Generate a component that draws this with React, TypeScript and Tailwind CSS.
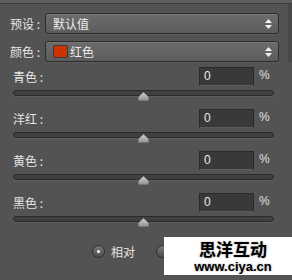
import React from 'react';

const CJK = "font-['Noto_Sans_CJK_SC','Noto_Sans',sans-serif]";

const ROWS = ['青色', '洋红', '黄色', '黑色'];

function UpDown() {
  return (
    <svg width="7" height="10" viewBox="0 0 7 10" className="shrink-0">
      <polygon points="3.5,0 7,4 0,4" fill="#f0f0f0" />
      <polygon points="0,6 7,6 3.5,10" fill="#f0f0f0" />
    </svg>
  );
}

function Select({ children }: { children: React.ReactNode }) {
  return (
    <div className="w-[234px] h-[21px] flex items-center pl-[7px] pr-[6px] rounded-[3px] border border-[#2c2c2c] bg-gradient-to-b from-[#6c6c6c] to-[#5c5c5c] shadow-[inset_0_1px_0_#777,0_1px_0_#5e5e5e]">
      <div className={`flex-1 flex items-center gap-[2px] text-[12px] leading-[19px] text-[#ececec] ${CJK}`}>{children}</div>
      <UpDown />
    </div>
  );
}

function Thumb() {
  return (
    <svg width="11" height="9" viewBox="0 0 11 9" className="absolute left-[125px] top-[2px]">
      <defs>
        <linearGradient id="tg" x1="0" y1="0" x2="0" y2="1">
          <stop offset="0" stopColor="#d6d6d6" />
          <stop offset="1" stopColor="#8c8c8c" />
        </linearGradient>
      </defs>
      <polygon points="5.5,0 11,5 11,9 0,9 0,5" fill="url(#tg)" stroke="#3a3a3a" strokeWidth="0.6" />
    </svg>
  );
}

function SliderRow({ label }: { label: string }) {
  return (
    <div className="flex flex-col">
      <div className="flex items-center h-[19px]">
        <div className={`w-[199px] shrink-0 whitespace-nowrap pl-[13px] text-[12px] leading-[19px] text-[#e6e6e6] ${CJK}`}>{label} :</div>
        <div className="w-[55px] h-[19px] shrink-0 flex items-center pl-[4px] bg-[#393939] border border-[#2a2a2a] border-b-[#5c5c5c] text-[12px] leading-[17px] text-[#eaeaea] font-['Liberation_Sans',sans-serif]">
          0
        </div>
        <div className="pl-[5px] pb-[3px] text-[12px] leading-[15px] text-[#e0e0e0] font-['Liberation_Sans',sans-serif]">%</div>
      </div>
      <div className="relative ml-[13px] mt-[4px] w-[261px] h-[6px]">
        <div className="h-[6px] rounded-[3px] bg-[#404040] border border-[#2b2b2b] shadow-[0_1px_0_#5f5f5f]" />
        <Thumb />
      </div>
    </div>
  );
}

function Radio({ checked }: { checked?: boolean }) {
  return (
    <div className="w-[13px] h-[13px] rounded-full border border-[#2c2c2c] bg-gradient-to-b from-[#767676] to-[#4e4e4e] flex items-center justify-center">
      {checked && <div className="w-[3px] h-[3px] rounded-full bg-white" />}
    </div>
  );
}

export default function App() {
  return (
    <div className="relative w-[292px] h-[280px] bg-[#535353] overflow-hidden">
      <div className="h-[3px] bg-[#5e5e5e]" />
      <div className="h-px bg-[#3a3a3a]" />
      <div className="absolute right-0 top-[4px] w-[4px] h-[58px] bg-[#484848]" />

      <div className="flex flex-col gap-[7px] mt-[9px]">
        <div className="flex items-center h-[21px]">
          <div className={`w-[45px] shrink-0 whitespace-nowrap pl-[10px] text-[12px] leading-[19px] text-[#e6e6e6] ${CJK}`}>预设 :</div>
          <Select>默认值</Select>
        </div>
        <div className="flex items-center h-[21px]">
          <div className={`w-[45px] shrink-0 whitespace-nowrap pl-[10px] text-[12px] leading-[19px] text-[#e6e6e6] ${CJK}`}>颜色 :</div>
          <Select>
            <span className="w-[15px] h-[13px] bg-[#cc3300] border border-[#3a3a3a] rounded-[2px]" />
            <span>红色</span>
          </Select>
        </div>
      </div>

      <div className="flex flex-col gap-[13px] mt-[5px]">
        {ROWS.map((r) => (
          <SliderRow key={r} label={r} />
        ))}
      </div>

      <div className="flex items-center mt-[23px] pl-[92px] gap-[6px]">
        <Radio checked />
        <span className={`text-[12px] leading-[13px] text-[#e6e6e6] ${CJK}`}>相对</span>
        <div className="ml-[15px]">
          <Radio />
        </div>
      </div>

      {/* watermark */}
      <div className="absolute left-[164px] top-[237px] w-[128px] h-[38px] bg-white flex flex-col items-center justify-center gap-[1px] pl-[10px]">
        <div className={`text-[17px] leading-[20px] font-bold text-black ${CJK} [text-shadow:0_0_2px_#999]`}>思洋互动</div>
        <div className="text-[13px] leading-[13px] font-bold text-black font-['Liberation_Sans',sans-serif] [text-shadow:0_0_2px_#999]">www.ciya.cn</div>
      </div>
    </div>
  );
}
